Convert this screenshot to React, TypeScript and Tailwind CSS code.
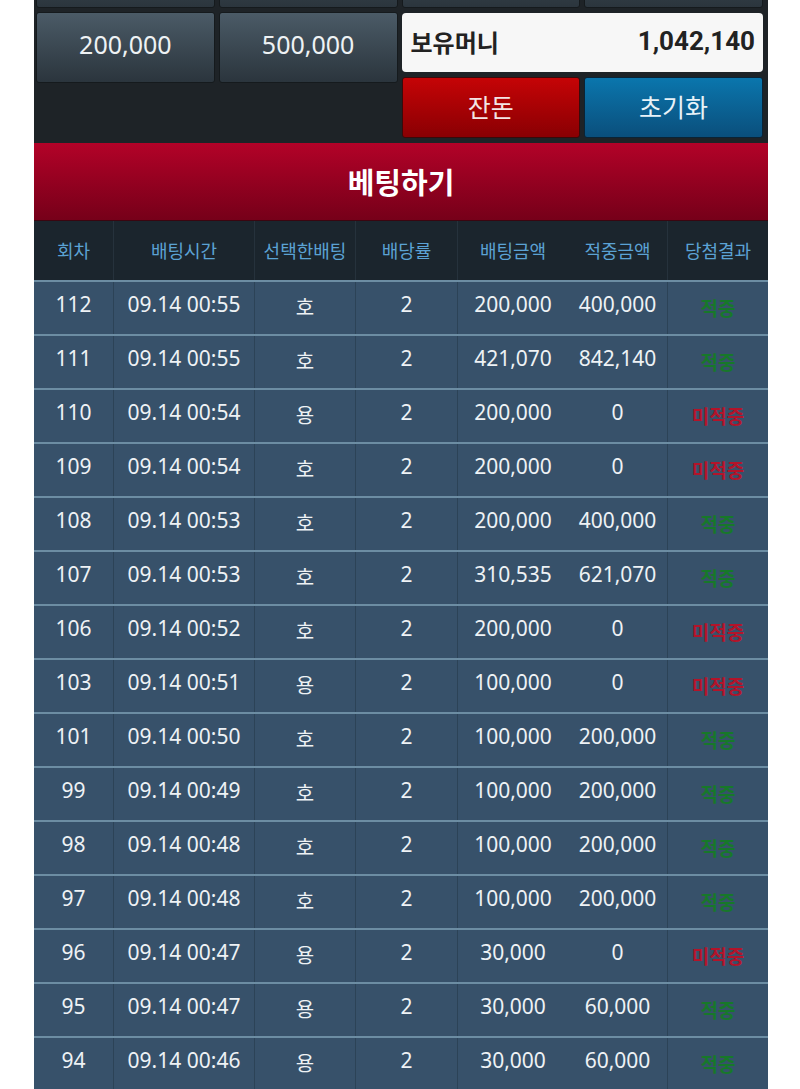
import React from 'react'

type Row = {
  no: string
  time: string
  pick: string
  odds: string
  bet: string
  win: string
  hit: boolean
}

const rows: Row[] = [
  { no: '112', time: '09.14 00:55', pick: '호', odds: '2', bet: '200,000', win: '400,000', hit: true },
  { no: '111', time: '09.14 00:55', pick: '호', odds: '2', bet: '421,070', win: '842,140', hit: true },
  { no: '110', time: '09.14 00:54', pick: '용', odds: '2', bet: '200,000', win: '0', hit: false },
  { no: '109', time: '09.14 00:54', pick: '호', odds: '2', bet: '200,000', win: '0', hit: false },
  { no: '108', time: '09.14 00:53', pick: '호', odds: '2', bet: '200,000', win: '400,000', hit: true },
  { no: '107', time: '09.14 00:53', pick: '호', odds: '2', bet: '310,535', win: '621,070', hit: true },
  { no: '106', time: '09.14 00:52', pick: '호', odds: '2', bet: '200,000', win: '0', hit: false },
  { no: '103', time: '09.14 00:51', pick: '용', odds: '2', bet: '100,000', win: '0', hit: false },
  { no: '101', time: '09.14 00:50', pick: '호', odds: '2', bet: '100,000', win: '200,000', hit: true },
  { no: '99', time: '09.14 00:49', pick: '호', odds: '2', bet: '100,000', win: '200,000', hit: true },
  { no: '98', time: '09.14 00:48', pick: '호', odds: '2', bet: '100,000', win: '200,000', hit: true },
  { no: '97', time: '09.14 00:48', pick: '호', odds: '2', bet: '100,000', win: '200,000', hit: true },
  { no: '96', time: '09.14 00:47', pick: '용', odds: '2', bet: '30,000', win: '0', hit: false },
  { no: '95', time: '09.14 00:47', pick: '용', odds: '2', bet: '30,000', win: '60,000', hit: true },
  { no: '94', time: '09.14 00:46', pick: '용', odds: '2', bet: '30,000', win: '60,000', hit: true },
]

const headers = ['회차', '배팅시간', '선택한배팅', '배당률', '배팅금액', '적중금액', '당첨결과']

const cols = 'grid grid-cols-[80px_141px_101px_102px_110px_100px_100px]'

const grayBtn =
  'flex h-[71px] items-center justify-center rounded-[3px] border border-[#151a1d] bg-gradient-to-b from-[#4b5b67] to-[#2b353d] pb-[6px] text-[25px] text-[#eef2f4]'

const kr = { fontFamily: '"Noto Sans CJK KR", sans-serif' }

export default function App() {
  return (
    <div className="min-h-[1089px] overflow-hidden bg-white" style={{ fontFamily: '"Noto Sans", "Noto Sans CJK KR", sans-serif' }}>
      <div className="mx-[34px] w-[734px] bg-[#1e2327]">
        {/* chip buttons, upper row scrolled out of view */}
        <div className="-mt-[63px] grid grid-cols-4 gap-[4px] pl-[2px] pr-[5px]">
          <div className={grayBtn} />
          <div className={grayBtn} />
          <div className={grayBtn} />
          <div className={grayBtn} />
        </div>

        <div className="mt-[4px] flex gap-[4px] pl-[2px] pr-[5px]">
          <div className="grid flex-[2] grid-cols-2 gap-[4px] self-start">
            <div className={grayBtn}>200,000</div>
            <div className={grayBtn}>500,000</div>
          </div>
          <div className="flex flex-[2] flex-col gap-[5px] pt-[1px]">
            <div className="flex h-[59px] items-center justify-between rounded-[4px] bg-[#f7f7f7] pb-[2px] pl-[9px] pr-[8px] text-[#222]" style={kr}>
              <span className="text-[24px] font-bold">보유머니</span>
              <span className="text-[26px] font-bold" style={{ fontFamily: 'Roboto, "Noto Sans", sans-serif' }}>
                1,042,140
              </span>
            </div>
            <div className="grid grid-cols-2 gap-[4px]">
              <div className="flex h-[61px] items-center justify-center rounded-[3px] border border-[#3a0a0a] bg-gradient-to-b from-[#c50406] to-[#8a0003] pb-[2px] text-[25px] text-[#f3e4e4]" style={kr}>
                잔돈
              </div>
              <div className="flex h-[61px] items-center justify-center rounded-[3px] border border-[#0a2436] bg-gradient-to-b from-[#0a76ad] to-[#0a4f7c] pb-[2px] text-[25px] text-[#e8f2f8]" style={kr}>
                초기화
              </div>
            </div>
          </div>
        </div>

        <div className="h-[5px]" />

        {/* bet button */}
        <div className="flex h-[78px] items-center justify-center border-b border-[#3a0610] bg-gradient-to-b from-[#b30228] to-[#760019] text-[29px] font-bold text-white" style={kr}>
          베팅하기
        </div>

        {/* header */}
        <div className={`${cols} h-[59px] bg-[#1b252d] text-[18px] text-[#5ba2d4]`} style={kr}>
          {headers.map((h, i) => (
            <div
              key={h}
              className={`flex items-center justify-center ${i === 4 || i === 6 ? '' : 'border-r border-[#26323c]'}`}
            >
              {h}
            </div>
          ))}
        </div>

        {/* rows */}
        {rows.map((r) => (
          <div key={r.no} className={`${cols} h-[54px] border-t-2 border-[#6c8da3] bg-[#37516a] text-[21px] text-[#eef2f5]`}>
            <div className="flex items-center justify-center border-r border-[#2c4357] pb-[6px]">{r.no}</div>
            <div className="flex items-center justify-center border-r border-[#2c4357] pb-[6px]">{r.time}</div>
            <div className="flex items-center justify-center border-r border-[#2c4357] pb-[2px] text-[20px]" style={kr}>
              {r.pick}
            </div>
            <div className="flex items-center justify-center border-r border-[#2c4357] pb-[6px]">{r.odds}</div>
            <div className="flex items-center justify-center pb-[6px]">{r.bet}</div>
            <div className="flex items-center justify-center border-r border-[#2c4357] pb-[6px]">{r.win}</div>
            <div
              className={`flex items-center justify-center text-[19px] font-bold ${r.hit ? 'text-[#17782a]' : 'text-[#b3142a]'}`}
              style={kr}
            >
              {r.hit ? '적중' : '미적중'}
            </div>
          </div>
        ))}
      </div>
    </div>
  )
}
